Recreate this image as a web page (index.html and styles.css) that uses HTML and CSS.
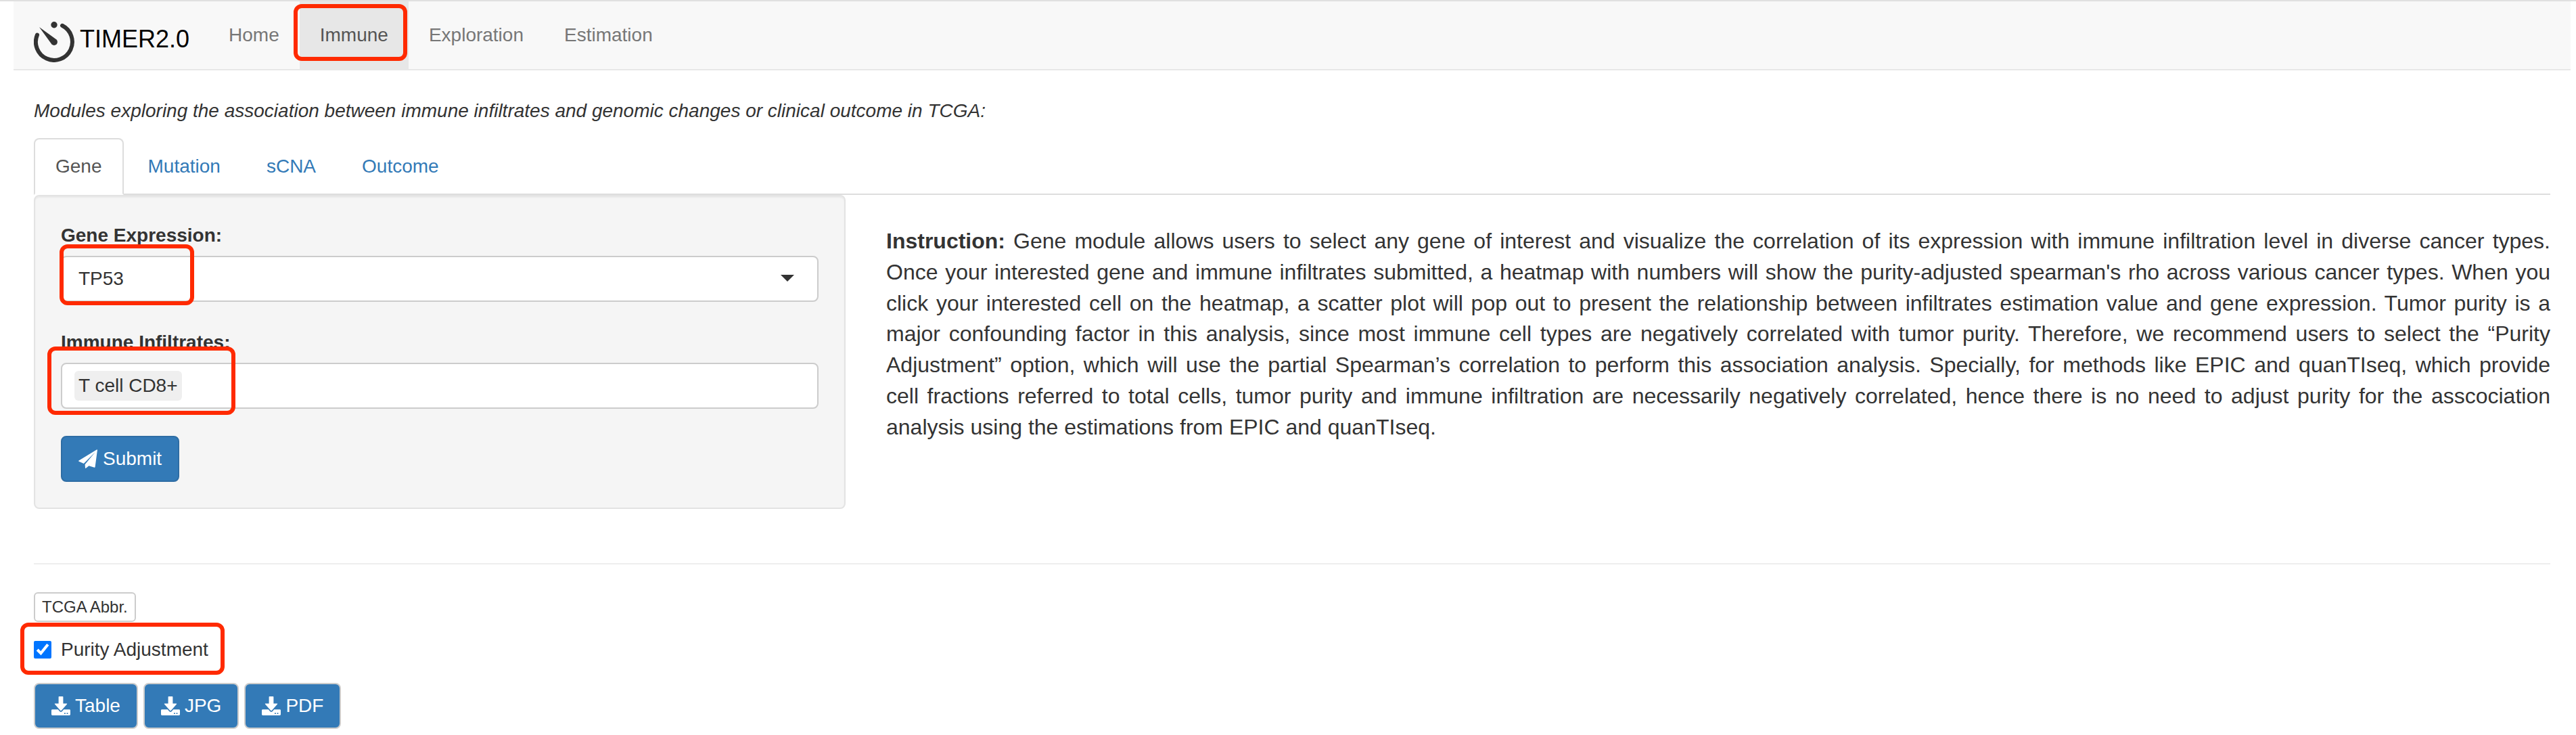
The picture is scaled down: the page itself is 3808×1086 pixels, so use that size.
FILE: index.html
```html
<!DOCTYPE html>
<html lang="en">
<head>
  <meta charset="UTF-8">
  <meta name="viewport" content="width=device-width, initial-scale=1.0">
  <title>TIMER2.0</title>
  <link rel="stylesheet" href="styles.css">
</head>
<body>
  <header class="navbar">
    <a class="brand" href="#">
      <svg class="brand-logo" viewBox="0 0 60 60" aria-hidden="true">
        <path d="M5 19.500A27 27 0 1 0 42 5.800" fill="none" stroke="#333" stroke-width="6" stroke-linecap="round"/>
        <circle cx="30" cy="4.700" r="4.700" fill="#333"/>
        <path d="M8 8L33.500 26.500A4.800 4.800 0 0 1 26.500 33.500Z" fill="#333"/>
      </svg>
      TIMER2.0
    </a>
    <nav class="nav">
      <a href="#">Home</a>
      <a class="active marked" href="#">Immune</a>
      <a href="#">Exploration</a>
      <a href="#">Estimation</a>
    </nav>
  </header>

  <main class="container">
    <p class="intro">Modules exploring the association between immune infiltrates and genomic changes or clinical outcome in TCGA:</p>

    <nav class="tabs">
      <a class="active" href="#">Gene</a>
      <a href="#">Mutation</a>
      <a href="#">sCNA</a>
      <a href="#">Outcome</a>
    </nav>

    <div class="row">
      <form class="well">
        <div class="form-group">
          <label for="gene">Gene Expression:</label>
          <div class="select-wrap marked">
            <select id="gene" class="control">
              <option>TP53</option>
            </select>
            <svg class="caret" viewBox="0 0 20 10" aria-hidden="true"><path d="M0 0H20L10 10Z" fill="#333"/></svg>
          </div>
        </div>
        <div class="form-group">
          <label for="infiltrates">Immune Infiltrates:</label>
          <div class="control multi marked">
            <span class="item">T cell CD8+</span>
            <input type="text" id="infiltrates">
          </div>
        </div>
        <button type="button" class="btn btn-primary">
          <svg class="icon" viewBox="0 0 28 28" aria-hidden="true">
            <path fill="currentColor" d="M27.200 0.200Q28 0.200 27.900 1.200L24.600 26Q24.400 27 23.500 26.700L15.400 24.300L11 27.800Q10 28.400 10 27.200L9.600 22.300L25 3.800L7.800 20.900L0.600 17.800Q-0.400 17.200 0.600 16.500Z"/>
          </svg>
          Submit
        </button>
      </form>

      <p class="instruction">
        <b>Instruction:</b> Gene module allows users to select any gene of interest and visualize the correlation of its expression with immune infiltration level in diverse cancer types.<br>
        Once your interested gene and immune infiltrates submitted, a heatmap with numbers will show the purity-adjusted spearman's rho across various cancer types. When you<br>
        click your interested cell on the heatmap, a scatter plot will pop out to present the relationship between infiltrates estimation value and gene expression. Tumor purity is a<br>
        major confounding factor in this analysis, since most immune cell types are negatively correlated with tumor purity. Therefore, we recommend users to select the “Purity<br>
        Adjustment” option, which will use the partial Spearman’s correlation to perform this association analysis. Specially, for methods like EPIC and quanTIseq, which provide<br>
        cell fractions referred to total cells, tumor purity and immune infiltration are necessarily negatively correlated, hence there is no need to adjust purity for the asscociation
        <span class="last-line">analysis using the estimations from EPIC and quanTIseq.</span>
      </p>
    </div>

    <hr>

    <button type="button" class="btn-small">TCGA Abbr.</button>

    <div class="checkbox marked">
      <input type="checkbox" id="purity" checked>
      <label for="purity">Purity Adjustment</label>
    </div>

    <svg width="0" height="0" class="defs" aria-hidden="true">
      <symbol id="download" viewBox="0 0 28 28">
        <path fill="currentColor" d="M11.400 0h5.200q.8 0 .8.800v9.800h5.200q1.200 0 .4 1L14.800 20.800q-.8.800-1.600 0L5 11.600q-.8-1 .4-1h5.200V.8q0-.8.800-.8z"/>
        <path fill="currentColor" fill-rule="evenodd" d="M1.400 19.300h8.400l2.300 2.600q1.900 1.900 3.800 0l2.300-2.600h8.400q1.400 0 1.400 1.400v5.900q0 1.400-1.400 1.400H1.400Q0 28 0 26.600v-5.900q0-1.400 1.400-1.400zM19 24.200v1.800h1.800v-1.800zM22.600 24.200v1.800h1.800v-1.800z"/>
      </symbol>
    </svg>
    <div class="downloads">
      <button type="button" class="btn btn-download"><svg class="icon" aria-hidden="true"><use href="#download"/></svg>Table</button>
      <button type="button" class="btn btn-download"><svg class="icon" aria-hidden="true"><use href="#download"/></svg>JPG</button>
      <button type="button" class="btn btn-download"><svg class="icon" aria-hidden="true"><use href="#download"/></svg>PDF</button>
    </div>
  </main>
</body>
</html>
```
FILE: styles.css
```css
:root {
  --primary: #337ab7;
  --text: #333;
  --border: #ccc;
  --mark: #ff2a00;
}

*, *::after {
  box-sizing: border-box;
}

body {
  margin: 0;
  border-top: 2px solid #e0e0e0;
  font-family: "Liberation Sans", Arial, sans-serif;
  font-size: 28px;
  line-height: 40px;
  color: var(--text);
  background: #fff;
}

a {
  color: var(--primary);
  text-decoration: none;
}

button, input, select {
  font: inherit;
  color: inherit;
}

/* navbar */
.navbar {
  display: flex;
  margin: 0 8px 0 20px;
  padding-left: 30px;
  background: #f8f8f8;
  border-bottom: 2px solid #e7e7e7;
}

.brand {
  display: flex;
  align-items: center;
  gap: 8px;
  padding: 12px 28px 0 0;
  font-size: 36px;
  color: #000;
}

.brand-logo {
  width: 60px;
  height: 60px;
  margin-top: 8px;
}

.nav {
  display: flex;
  margin-bottom: -2px;
}

.nav a {
  padding: 30px 30px 32px;
  color: #777;
}

.nav .active {
  color: #555;
  background: #e7e7e7;
}

/* red highlight frames */
.marked {
  position: relative;
}

.marked::after {
  content: "";
  position: absolute;
  border: 6px solid var(--mark);
  border-radius: 12px;
  pointer-events: none;
}

.nav .marked::after {
  inset: 4px 2px 14px -9px;
}

.select-wrap.marked::after {
  inset: -17px auto -5px -2px;
  width: 199px;
}

.multi.marked::after {
  inset: -26px auto -11px -22px;
  width: 278px;
}

.checkbox.marked::after {
  inset: -20px -24px -17px -20px;
}

/* content */
.container {
  padding: 0 38px 0 50px;
}

.intro {
  margin: 40px 0 20px;
  font-style: italic;
}

.tabs {
  display: flex;
  gap: 4px;
  border-bottom: 2px solid #ddd;
}

.tabs a {
  margin-bottom: -2px;
  padding: 20px 30px;
  border: 2px solid transparent;
  border-radius: 8px 8px 0 0;
}

.tabs .active {
  color: #555;
  background: #fff;
  border-color: #ddd;
  border-bottom-color: transparent;
}

.row {
  display: grid;
  grid-template-columns: minmax(0, 1fr) minmax(0, 2fr);
  align-items: start;
  margin: 0 -30px;
}

.well {
  margin: 0 30px;
  padding: 38px;
  background: #f5f5f5;
  border: 2px solid #e3e3e3;
  border-radius: 8px;
  box-shadow: inset 0 2px 2px rgba(0, 0, 0, 0.05);
}

.form-group {
  margin-bottom: 40px;
}

.form-group label {
  display: block;
  margin-bottom: 10px;
  font-weight: bold;
}

.control {
  display: flex;
  align-items: center;
  width: 100%;
  height: 68px;
  padding: 0 24px;
  background: #fff;
  border: 2px solid var(--border);
  border-radius: 8px;
  appearance: none;
}

.caret {
  position: absolute;
  top: 28px;
  right: 36px;
  width: 20px;
  height: 10px;
}

.multi {
  padding: 0 18px;
}

.item {
  padding: 2px 6px;
  background: #efefef;
  border-radius: 6px;
}

.multi input {
  flex: 1;
  min-width: 0;
  border: 0;
  outline: 0;
  background: none;
}

.btn {
  display: flex;
  align-items: center;
  gap: 8px;
  height: 68px;
  padding: 0 24px;
  color: #fff;
  background: var(--primary);
  border: 2px solid #2e6da4;
  border-radius: 8px;
}

.icon {
  width: 28px;
  height: 28px;
}

.instruction {
  margin: 46px 30px 0;
  font-size: 32px;
  line-height: 1.43;
  text-align: justify;
  text-align-last: justify;
}

.last-line {
  display: block;
  text-align-last: left;
}

hr {
  margin: 80px 0 41px;
  border: 0;
  border-top: 2px solid #eee;
}

.btn-small {
  display: block;
  height: 44px;
  padding: 0 10px;
  font-size: 24px;
  line-height: 36px;
  background: #fff;
  border: 2px solid var(--border);
  border-radius: 6px;
}

.checkbox {
  display: flex;
  align-items: center;
  gap: 14px;
  width: fit-content;
  margin: 21px 0 29px;
}

.checkbox input {
  width: 26px;
  height: 26px;
  margin: 0;
  accent-color: #0075ff;
}

.defs {
  display: block;
}

.downloads {
  display: flex;
  gap: 8px;
}

.btn-download {
  gap: 7px;
  border-color: var(--border);
}
```
